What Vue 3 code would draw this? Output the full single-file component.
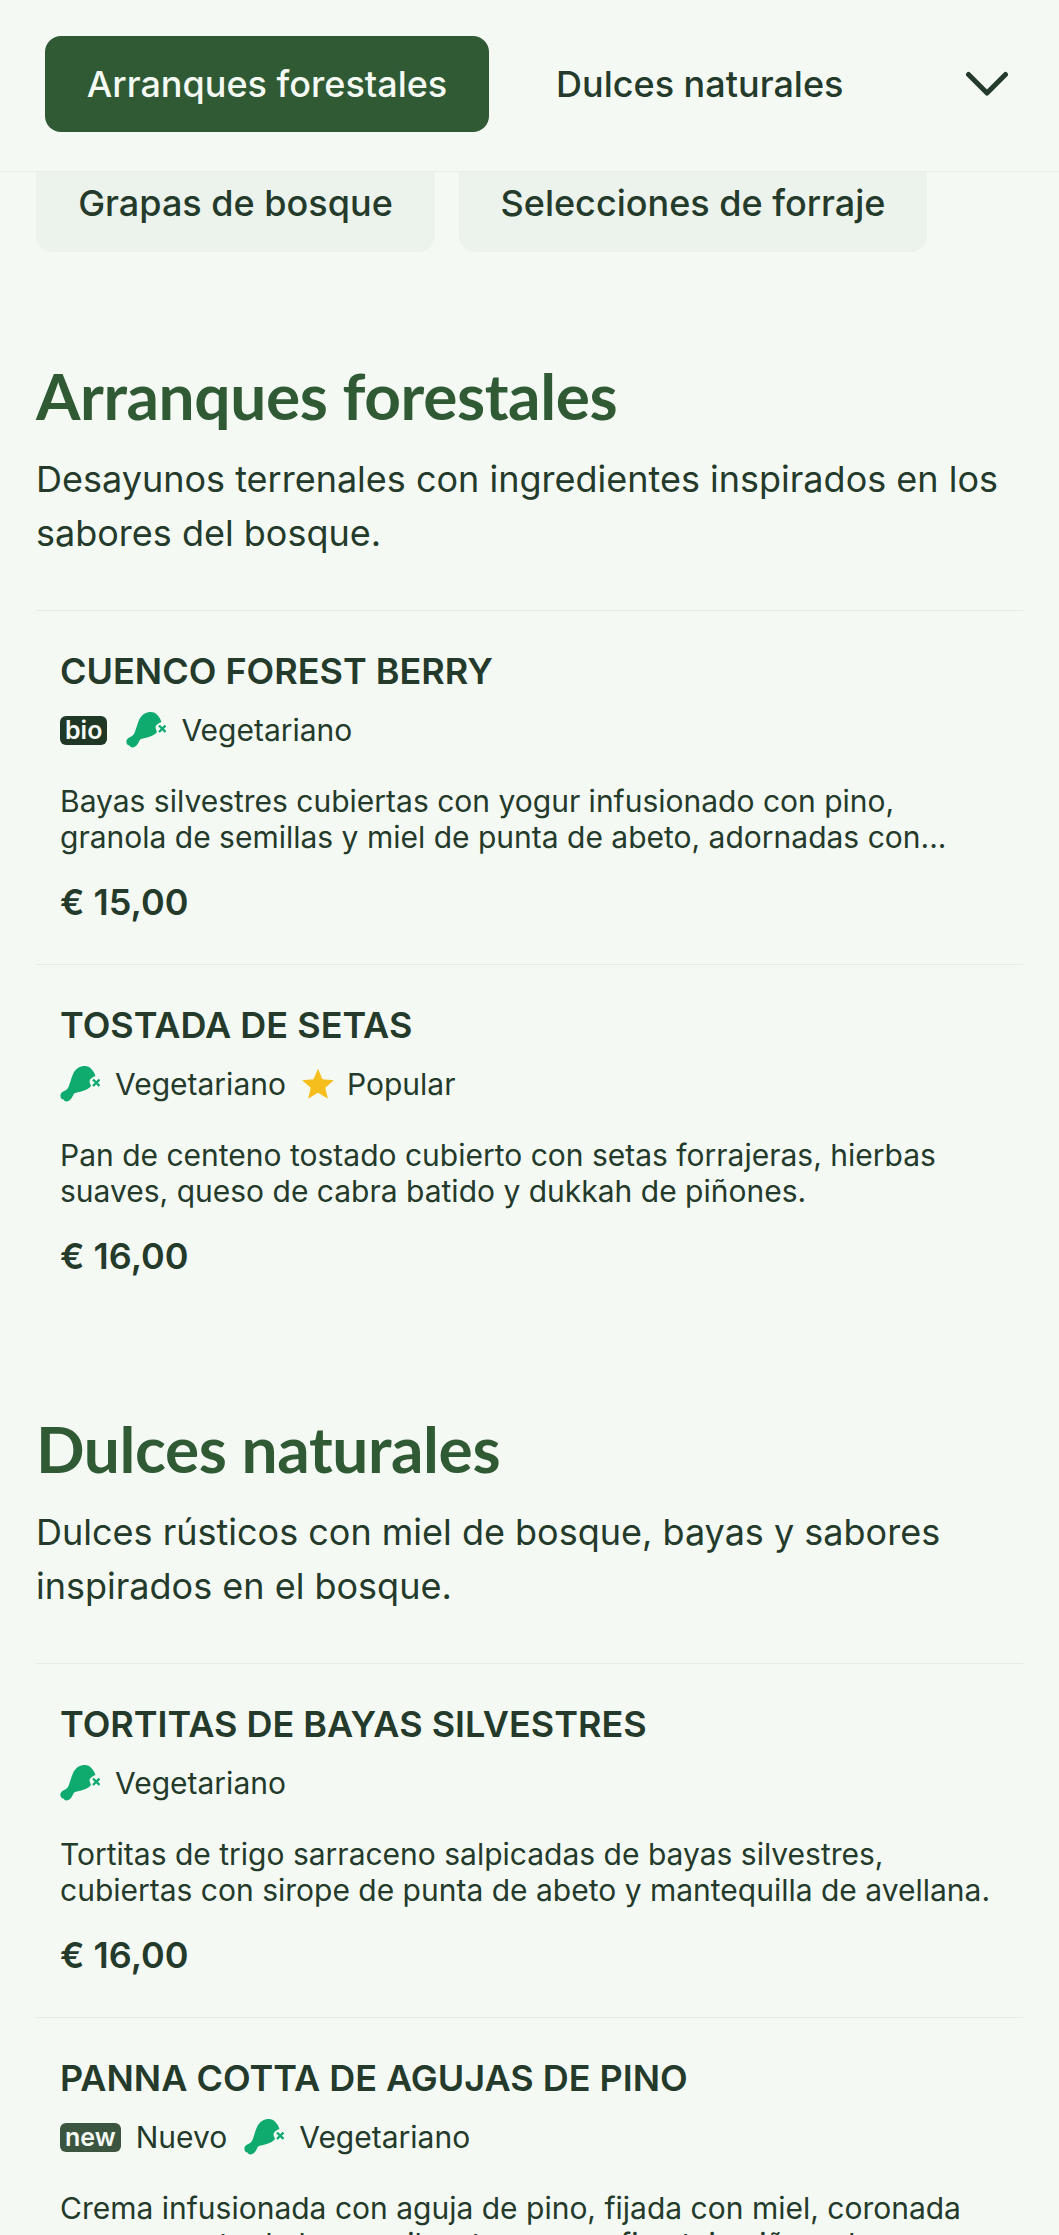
<script setup>
const sections = [
  {
    title: 'Arranques forestales',
    desc: 'Desayunos terrenales con ingredientes inspirados en los sabores del bosque.',
    items: [
      { name: 'CUENCO FOREST BERRY', tags: ['bio', 'veg'], text: ['Bayas silvestres cubiertas con yogur infusionado con pino,', 'granola de semillas y miel de punta de abeto, adornadas con...'], price: '€ 15,00' },
      { name: 'TOSTADA DE SETAS', tags: ['veg', 'pop'], text: ['Pan de centeno tostado cubierto con setas forrajeras, hierbas', 'suaves, queso de cabra batido y dukkah de piñones.'], price: '€ 16,00' },
    ],
  },
  {
    title: 'Dulces naturales',
    desc: 'Dulces rústicos con miel de bosque, bayas y sabores inspirados en el bosque.',
    items: [
      { name: 'TORTITAS DE BAYAS SILVESTRES', tags: ['veg'], text: ['Tortitas de trigo sarraceno salpicadas de bayas silvestres,', 'cubiertas con sirope de punta de abeto y mantequilla de avellana.'], price: '€ 16,00' },
      { name: 'PANNA COTTA DE AGUJAS DE PINO', tags: ['new', 'veg'], text: ['Crema infusionada con aguja de pino, fijada con miel, coronada', 'con compota de bayas silvestres y una fina teja piñonada.'], price: '€ 14,00' },
    ],
  },
]
</script>

<template>
  <div class="page">
    <header class="topbar">
      <a class="tab active">Arranques forestales</a>
      <a class="tab">Dulces naturales</a>
      <svg class="chev" width="44" height="26" viewBox="0 0 44 26" fill="none">
        <path d="M3.500 3.500 L22 22 L40.500 3.500" stroke="#243a2a" stroke-width="5" stroke-linecap="round" stroke-linejoin="round" />
      </svg>
    </header>
    <div class="chips">
      <a class="chip">Grapas de bosque</a>
      <a class="chip">Selecciones de forraje</a>
    </div>
    <section v-for="s in sections" :key="s.title" class="section">
      <h2>{{ s.title }}</h2>
      <p class="desc">{{ s.desc }}</p>
      <article v-for="it in s.items" :key="it.name" class="item">
        <h3>{{ it.name }}</h3>
        <div class="tags">
          <template v-for="t in it.tags" :key="t">
            <span v-if="t === 'bio'" class="tag bio-tag">
              <span class="badge">bio</span>
            </span>
            <span v-else-if="t === 'new'" class="tag">
              <span class="badge new">new</span><span>Nuevo</span>
            </span>
            <span v-else-if="t === 'veg'" class="tag">
              <svg class="leg" width="40" height="36" viewBox="0 0 40 36">
                <path fill="#0faa6e" d="M25 0C30 0 34 5 35.500 10C33 11 30 12.500 29.500 15C29.500 17 30.500 18 31 20C27 25 20 25.500 15 27C13 28 13 31 10.500 33.500C8 36 4.500 36 3.500 33.500C1 33.500-.5 30 1 27.500C2.500 25 6 25 8 22C10 18 11 12 13.500 7C16 2.500 20 0 25 0Z" />
                <path d="M33 13.500L39.500 20M39.500 13.500L33 20" stroke="#0faa6e" stroke-width="2.400" />
              </svg>
              <span>Vegetariano</span>
            </span>
            <span v-else class="tag star-tag">
              <svg class="star" width="32" height="32" viewBox="1 1 22 22">
                <path fill="#f6be1c" d="M12 1.500l3.100 7.200 7.800.7-5.900 5.100 1.800 7.600L12 18.100l-6.800 4 1.800-7.600-5.900-5.100 7.800-.7z" />
              </svg>
              <span>Popular</span>
            </span>
          </template>
        </div>
        <p class="text"><span v-for="l in it.text" :key="l" class="line">{{ l }}</span></p>
        <div class="price">{{ it.price }}</div>
      </article>
    </section>
  </div>
</template>

<style>
html, body { margin: 0; background: #f4f9f4; }
</style>

<style scoped>
.page {
  width: 1059px;
  height: 2235px;
  overflow: hidden;
  background: #f4f9f4;
  font-family: Inter, "Liberation Sans", sans-serif;
  color: #243a2a;
}
.topbar {
  box-sizing: border-box;
  height: 172px;
  display: flex;
  align-items: flex-start;
  padding: 36px 50px 0 45px;
  border-bottom: 1px solid #e8eee8;
  position: relative;
  z-index: 1;
  background: #f4f9f4;
}
.tab {
  box-sizing: border-box;
  height: 96px;
  display: flex;
  align-items: center;
  padding: 0 43px;
  font-size: 36px;
  font-weight: 500;
  border-radius: 16px;
}
.tab.active { background: #2f5a34; color: #f4f9f4; width: 444px; margin-right: 24px; justify-content: center; padding: 0; }
.chev { margin-left: auto; margin-top: 35px; }
.chips {
  display: flex;
  gap: 24px;
  padding: 0 36px;
  margin-top: -20px;
  margin-bottom: 16px;
}
.chip {
  box-sizing: border-box;
  height: 100px;
  padding-top: 2px;
  display: flex;
  align-items: center;
  justify-content: center;
  background: #ecf2ec;
  border-radius: 16px;
  font-size: 36px;
  font-weight: 500;
}
.chip:nth-child(1) { width: 399px; }
.chip:nth-child(2) { width: 468px; }
.section { padding: 0 36px 3px; }
h2 {
  margin: 0;
  padding-top: 90px;
  font-family: Lato, "Liberation Sans", sans-serif;
  font-weight: 700;
  font-size: 64px;
  line-height: 76px;
  letter-spacing: -0.4px;
  color: #2f5a34;
}
.desc {
  margin: 18px 0 50px;
  font-size: 36px;
  line-height: 54px;
}
.item {
  border-top: 1px solid #e6ece6;
  padding: 38px 24px 0;
  height: 354px;
  box-sizing: border-box;
}
h3 {
  margin: 0;
  font-size: 36px;
  line-height: 44px;
  font-weight: 600;
}
.tags {
  display: flex;
  align-items: center;
  gap: 17px;
  margin-top: 15px;
  height: 44px;
  font-size: 30px;
}
.tag { display: inline-flex; align-items: center; gap: 15px; }
.bio-tag { margin-right: 2px; }
.star-tag { gap: 13px; margin-left: -1px; }
.badge {
  background: #1f3825;
  color: #f4f9f4;
  border-radius: 6px;
  font-size: 25px;
  font-weight: 600;
  line-height: 29px;
  padding: 0 5px;
}
.badge.new { background: #3c5540; }
.text {
  margin: 31px 0 0;
  font-size: 30px;
  line-height: 36px;
}
.line { display: block; white-space: nowrap; }
.price {
  margin-top: 25px;
  font-size: 36px;
  line-height: 44px;
  font-weight: 600;
}
</style>
